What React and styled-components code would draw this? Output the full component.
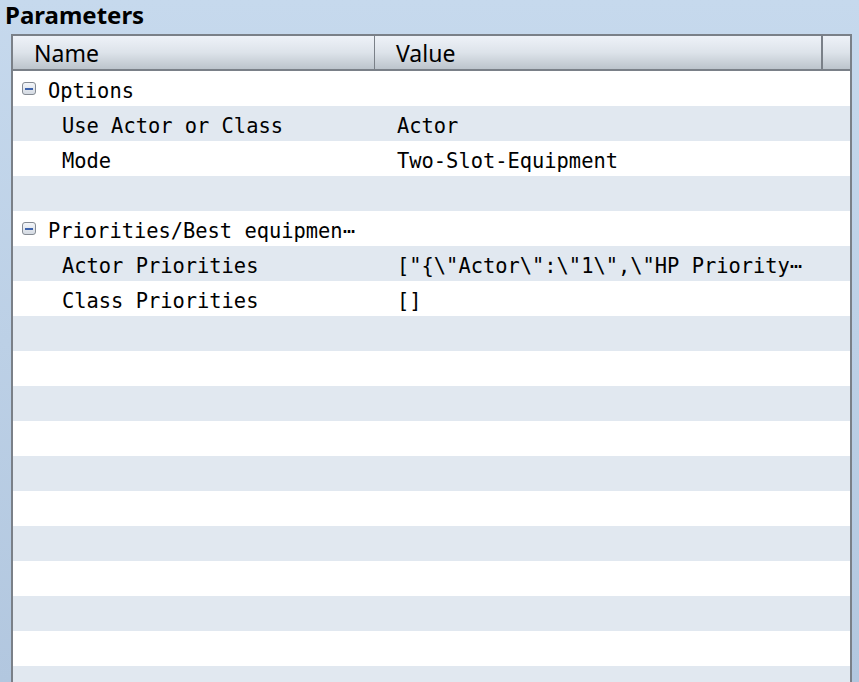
import { createGlobalStyle } from "styled-components";
import styled from "styled-components";

const GlobalStyle = createGlobalStyle`
  html, body {
    margin: 0;
    padding: 0;
    height: 100%;
    overflow: hidden;
  }
  #root {
    height: 100%;
  }
`;

const rows = [
  { kind: "group", name: "Options" },
  { kind: "item", name: "Use Actor or Class", value: "Actor" },
  { kind: "item", name: "Mode", value: "Two-Slot-Equipment" },
  { kind: "blank" },
  { kind: "group", name: "Priorities/Best equipmen⋯" },
  { kind: "item", name: "Actor Priorities", value: '["{\\"Actor\\":\\"1\\",\\"HP Priority⋯' },
  { kind: "item", name: "Class Priorities", value: "[]" },
];

const App = () => {
  const filled = [...rows];
  while (filled.length < 18) filled.push({ kind: "blank" });

  return (
    <Page>
      <GlobalStyle />
      <Title>Parameters</Title>
      <Panel>
        <HeaderRow>
          <HeaderCell>Name</HeaderCell>
          <HeaderCell divider>Value</HeaderCell>
          <HeaderCell divider thick />
        </HeaderRow>
        {filled.map((row, i) => (
          <Row key={i} shaded={i % 2 === 1}>
            <NameCell>
              {row.kind === "group" && (
                <>
                  <Toggle />
                  <span>{row.name}</span>
                </>
              )}
              {row.kind === "item" && <Indented>{row.name}</Indented>}
            </NameCell>
            <ValueCell>{row.value}</ValueCell>
          </Row>
        ))}
      </Panel>
    </Page>
  );
};

export default App;

const Page = styled.div`
  height: 100%;
  box-sizing: border-box;
  background: linear-gradient(to bottom, #c6d9ed 0%, #b2c7df 100%);
  padding: 0 7px 0 5px;
  display: flex;
  flex-direction: column;
`;

const Title = styled.div`
  font-family: "Noto Sans", sans-serif;
  font-weight: 700;
  font-size: 24px;
  line-height: 30px;
  height: 34px;
  flex-shrink: 0;
  color: #000;
`;

const Panel = styled.div`
  margin-left: 6px;
  border: 2px solid #7a8088;
  border-bottom: none;
  background: #fff;
  flex: 1;
  overflow: hidden;
`;

const HeaderRow = styled.div`
  display: grid;
  grid-template-columns: 361px 447px 1fr;
  height: 33px;
  border-bottom: 2px solid #7a8088;
  background: linear-gradient(to bottom, #eef2f8 0%, #dde3ea 50%, #bcc4cc 100%);
`;

const HeaderCell = styled.div`
  font-family: "Noto Sans", sans-serif;
  font-size: 23px;
  line-height: 35px;
  color: #000;
  padding-left: 21px;
  border-left: ${(p) => (p.divider ? (p.thick ? "2px" : "1px") : "0")} solid #7a8088;
`;

const Row = styled.div`
  display: grid;
  grid-template-columns: 361px 1fr;
  height: 35px;
  align-items: center;
  background: ${(p) => (p.shaded ? "#e1e8f0" : "#ffffff")};
  font-family: "DejaVu Sans Mono", monospace;
  font-size: 20.4px;
  line-height: 29px;
  color: #000;
`;

const NameCell = styled.div`
  display: flex;
  align-items: center;
  padding-left: 9px;
  padding-top: 6px;
  height: 35px;
  box-sizing: border-box;
  white-space: nowrap;
  overflow: hidden;
`;

const Indented = styled.span`
  padding-left: 40px;
`;

const ValueCell = styled.div`
  padding-left: 23px;
  padding-top: 6px;
  height: 35px;
  box-sizing: border-box;
  white-space: nowrap;
  overflow: hidden;
  display: flex;
  align-items: center;
`;

const Toggle = styled.span`
  position: relative;
  width: 12px;
  height: 11px;
  border: 1px solid #858b93;
  border-radius: 3px;
  background: linear-gradient(to bottom, #f4f6f9, #d4dae2);
  margin-right: 12px;
  margin-top: -6px;
  flex-shrink: 0;
  &::after {
    content: "";
    position: absolute;
    left: 2px;
    right: 2px;
    top: 5px;
    height: 2px;
    background: #3d63ad;
  }
`;
